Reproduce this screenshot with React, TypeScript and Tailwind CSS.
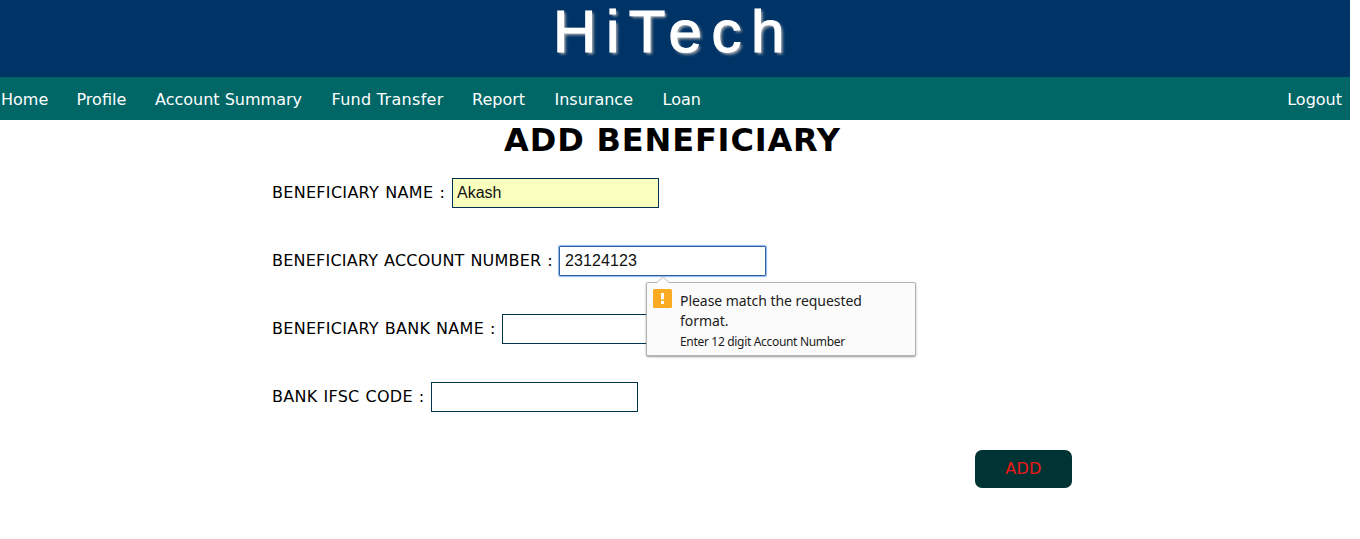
const links: [string, string][] = [
  ['Home', 'w-[75.5px]'],
  ['Profile', 'w-[78.5px]'],
  ['Account Summary', 'w-[176.5px]'],
  ['Fund Transfer', 'w-[140.5px] tracking-[0.3px]'],
  ['Report', 'w-[82.5px]'],
  ['Insurance', 'w-[108px]'],
  ['Loan', 'w-[60px]'],
];

const label = 'whitespace-nowrap text-[16px]';
const field = "h-[30px] w-[207px] border font-['Liberation_Sans',sans-serif] text-[16px] text-[#111] outline-none";

function ValidationBubble() {
  return (
    <div className="absolute top-[36px] left-[87px] z-10 flex h-[74px] w-[270px] rounded-[2px] border border-[#b4b4b4] bg-[#fbfbfb] font-['Noto_Sans',sans-serif] shadow-[0_1px_2px_rgba(0,0,0,0.4)]">
      <svg className="absolute -top-[7px] left-[9px]" width="14" height="8" viewBox="0 0 14 8">
        <path d="M0.5 7L7 0.8L13.5 7V8H0.5Z" fill="#fbfbfb" />
        <path d="M0.5 6.8L7 0.8L13.5 6.8" fill="none" stroke="#bdbdbd" />
      </svg>
      <svg className="mt-[6px] ml-[6px] shrink-0" width="19" height="19" viewBox="0 0 19 19">
        <rect width="19" height="19" rx="1.5" fill="#fbab21" />
        <path d="M8 4H11V10.5H8ZM8 12H11V15H8Z" fill="#fff" />
      </svg>
      <div className="ml-2 pt-[8px] text-[#1c1c1c]">
        <p className="w-[200px] text-[14px] leading-5 tracking-[-0.05px]">Please match the requested format.</p>
        <p className="mt-[3px] text-[12px] leading-4 tracking-[-0.32px] whitespace-nowrap">Enter 12 digit Account Number</p>
      </div>
    </div>
  );
}

export default function App() {
  return (
    <div className="h-[539px] w-[1350px] overflow-hidden bg-white font-['DejaVu_Sans',sans-serif] text-black">
      <header className="flex h-[77px] justify-center bg-[#003366] pr-[3px]">
        <h1 className="font-['Liberation_Sans',sans-serif] text-[60px] leading-[63px] tracking-[9.6px] text-white [-webkit-text-stroke:1.2px_#fff] [text-shadow:2px_2px_3px_#b0b0b0]">HiTech</h1>
      </header>
      <nav className="flex h-[43px] items-center bg-[#006666] pt-[2px] pl-px text-[16px] text-white">
        {links.map(([name, width]) => (
          <a key={name} className={`${width} whitespace-nowrap`}>{name}</a>
        ))}
        <a className="mr-2 ml-auto">Logout</a>
      </nav>
      <h2 className="mt-[1px] pr-[5px] text-center text-[32px] leading-[39px] font-bold tracking-[0.86px]">ADD BENEFICIARY</h2>
      <form className="mt-[18px] flex flex-col gap-[38px] pl-[272px]">
        <div className="flex h-[30px] items-center">
          <label className={`${label} w-[180px] tracking-[0.3px] [word-spacing:0.8px]`}>BENEFICIARY NAME :</label>
          <input className={`${field} border-[#003350] bg-[#faffbd] px-1`} defaultValue="Akash" />
        </div>
        <div className="flex h-[30px] items-center">
          <label className={`${label} w-[287px] tracking-[0.22px] [word-spacing:0.5px]`}>BENEFICIARY ACCOUNT NUMBER :</label>
          <div className="relative">
            <input className={`${field} rounded-[1px] border-[#2f5f9f] px-[5px] tracking-[0.1px] shadow-[0_0_1px_1px_#8eb8ef]`} defaultValue="23124123" />
            <ValidationBubble />
          </div>
        </div>
        <div className="flex h-[30px] items-center">
          <label className={`${label} w-[230px] tracking-[0.28px] [word-spacing:0.5px]`}>BENEFICIARY BANK NAME :</label>
          <input className={`${field} border-[#003350] px-[5px]`} />
        </div>
        <div className="flex h-[30px] items-center">
          <label className={`${label} w-[159px] tracking-[0.26px] [word-spacing:0.7px]`}>BANK IFSC CODE :</label>
          <input className={`${field} border-[#003350] px-[5px]`} />
        </div>
      </form>
      <button className="mt-[38px] ml-[975px] h-[38px] w-[97px] rounded-[7px] bg-[#003333] text-[16px] tracking-[0.3px] text-[#ee1717]">ADD</button>
    </div>
  );
}
